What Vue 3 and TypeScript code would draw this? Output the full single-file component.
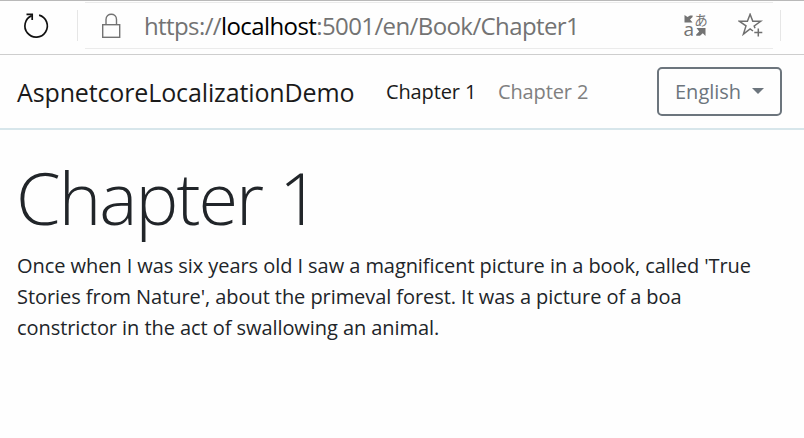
<script setup lang="ts">
const chapters = [
  { label: 'Chapter 1', active: true },
  { label: 'Chapter 2', active: false },
]
const lines: string[] = [
  "Once when I was six years old I saw a magnificent picture in a book, called 'True",
  "Stories from Nature', about the primeval forest. It was a picture of a boa",
  'constrictor in the act of swallowing an animal.',
]
</script>

<template>
  <div class="window">
    <div class="toolbar">
      <button class="reload" aria-label="Reload">
        <svg width="28" height="28" viewBox="0 0 28 28" fill="none" stroke="#111" stroke-width="1.7">
          <path d="M17.1 3.1A11.2 11.2 0 1 1 9.7 3.6" />
          <path d="M4.5 2.3H10.2V8" />
        </svg>
      </button>
      <div class="address">
        <svg class="lock" width="20" height="26" viewBox="0 0 20 26" fill="none" stroke="#737373" stroke-width="1.4">
          <rect x="1.7" y="11.7" width="17" height="12.6" />
          <path d="M5 11.5V6.5C5 -0.5 15.5 -0.5 15.5 6.5V11.5" />
        </svg>
        <span class="url">https://<b>localhost</b>:5001/en/Book/Chapter1</span>
        <svg class="translate" width="26" height="28" viewBox="0 0 26 28">
          <path d="M1.5 3L4.5 5L7 3.6H9.6V5L7 7.6L9.6 10.5H1.5Z" fill="#737373" />
          <path d="M13.5 16H22.5V24L19.8 21.2L17 23.8H13.2V22.4L16.2 19.4Z" fill="#737373" />
          <text x="11.2" y="13" font-size="13.5" fill="#737373" font-family="Noto Sans CJK JP, sans-serif">あ</text>
          <text x="0.6" y="24" font-size="19" fill="#737373" font-family="Open Sans, sans-serif">a</text>
        </svg>
        <svg class="star" width="26" height="26" viewBox="0 0 26 26" fill="none" stroke="#6f6f6f" stroke-width="1.5">
          <path d="M15 18L12.1 15.9L5.4 21.1L8 12.9L1.5 8.3H9.4L12.1 1.3L14.8 8.3H22.7L16.2 13L17 15.2" />
          <path d="M20.3 15.4V23.4M16.3 19.4H24.3" />
        </svg>
      </div>
    </div>
    <header class="navbar">
      <a class="brand">AspnetcoreLocalizationDemo</a>
      <nav>
        <a v-for="c in chapters" :key="c.label" :class="{ active: c.active }">{{ c.label }}</a>
      </nav>
      <button class="language"><span>English</span><i class="caret"></i></button>
    </header>
    <main>
      <h1>Chapter 1</h1>
      <p><span v-for="(l, i) in lines" :key="i" class="line">{{ l }}</span></p>
    </main>
  </div>
</template>

<style>
body { margin: 0; background: #fefefe; }
</style>
<style scoped>
.window { width: 804px; height: 438px; overflow: hidden; box-sizing: border-box; background: #fefefe; font-family: "Open Sans", "Noto Sans", sans-serif; color: #212529; white-space: nowrap; }
button { margin: 0; background: none; font: inherit; padding: 0; border: 0; }
.toolbar { height: 55px; box-sizing: border-box; border-top: 1px solid #b9b9b9; border-bottom: 1px solid #cecece; display: flex; align-items: flex-start; }
.reload { width: 78px; height: 31px; margin-top: 9px; padding-left: 22px; box-sizing: border-box; border-right: 1px solid #e6e6e6; text-align: left; }
.reload svg { display: block; }
.address { margin: 1px 0 0 7px; width: 688px; height: 47px; box-sizing: border-box; border-top: 1px solid #ebebeb; border-bottom: 1px solid #ebebeb; display: flex; align-items: center; }
.toolbar::after { content: ""; width: 1px; height: 31px; margin: 9px 0 0 7px; background: #e6e6e6; }
.lock { margin-left: 16px; flex: none; }
.url { margin-left: 23px; padding-top: 1px; flex: none; width: 435px; font-size: 24px; letter-spacing: -0.6px; line-height: 34px; color: #737373; }
.url b { font-weight: 400; color: #000; }
.translate { margin-left: 104px; flex: none; overflow: visible; }
.star { margin-left: 29px; flex: none; }
.navbar { height: 75px; box-sizing: border-box; border-bottom: 2px solid #d7e6eb; display: flex; align-items: center; padding: 0 22px 0 17px; }
.brand { font-size: 25px; letter-spacing: -0.13px; line-height: 34px; width: 338px; }
nav { display: flex; margin-left: 31px; gap: 22px; font-size: 20px; letter-spacing: -0.12px; line-height: 28px; color: #808080; }
nav a { width: 90px; }
nav .active, .brand { color: #1a1a1a; }
.language { margin-left: auto; width: 125px; height: 49px; border: 2px solid #6c757d; border-radius: 5px; box-sizing: border-box; display: flex; align-items: center; padding-left: 16px; font-size: 20px; color: #6c757d; }
.language span { width: 66px; text-align: left; }
.caret { margin-left: 11px; margin-bottom: 2px; border: 6px solid transparent; border-top-color: #6c757d; border-bottom: 0; }
main { padding: 24px 16px 0; }
h1 { margin: 0; font-size: 72px; letter-spacing: -1.95px; line-height: 86px; font-weight: 300; }
p { margin: 10px 0 0 1px; font-size: 20px; letter-spacing: -0.065px; line-height: 31px; }
.line { display: block; }
</style>
